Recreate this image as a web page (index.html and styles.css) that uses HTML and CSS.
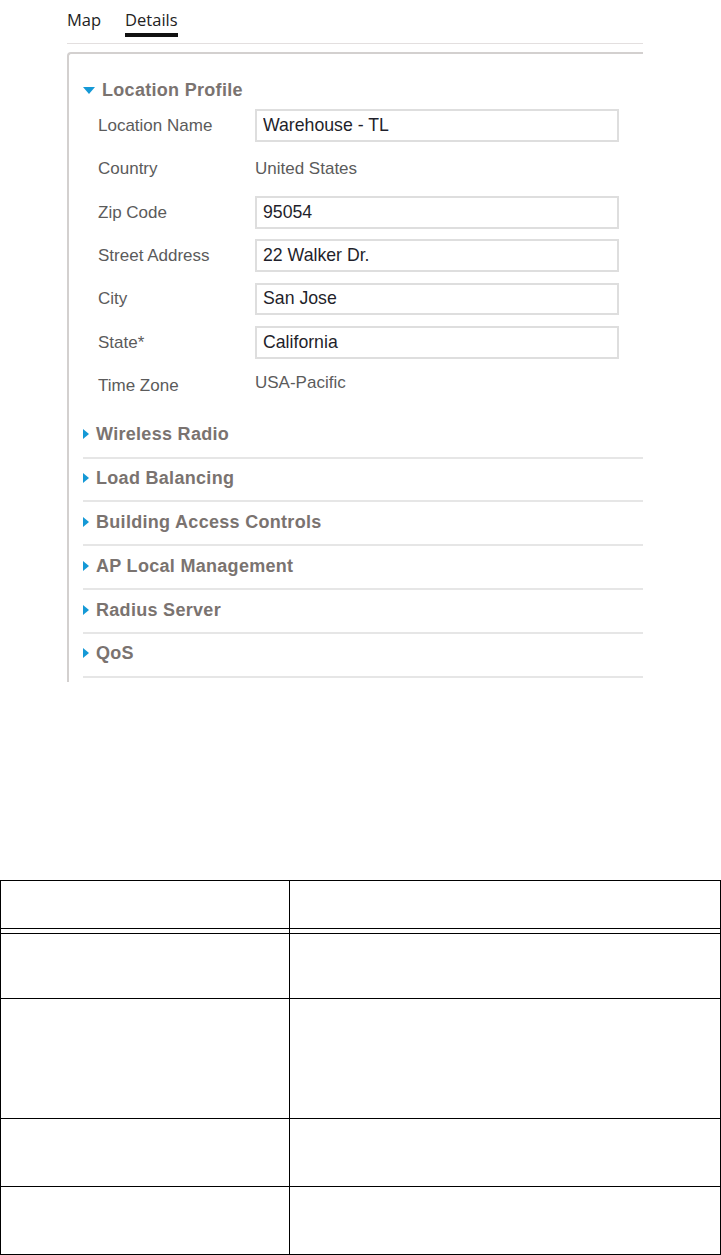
FILE: index.html
```html
<!DOCTYPE html>
<html lang="en">
<head>
    <meta charset="UTF-8">
    <meta name="viewport" content="width=device-width, initial-scale=1.0">
    <title>Location Details</title>
    <link rel="stylesheet" href="styles.css">
</head>
<body>

    <div class="tabs">
        <div class="tab">Map</div>
        <div class="tab active">Details</div>
    </div>

    <div class="panel">

        <div class="section open">
            <div class="section-title"><span class="arrow down"></span>Location Profile</div>
            <div class="form">
                <div class="row">
                    <span class="label">Location Name</span>
                    <input class="field" type="text" value="Warehouse - TL">
                </div>
                <div class="row">
                    <span class="label">Country</span>
                    <span class="value">United States</span>
                </div>
                <div class="row">
                    <span class="label">Zip Code</span>
                    <input class="field" type="text" value="95054">
                </div>
                <div class="row">
                    <span class="label">Street Address</span>
                    <input class="field" type="text" value="22 Walker Dr.">
                </div>
                <div class="row">
                    <span class="label">City</span>
                    <input class="field" type="text" value="San Jose">
                </div>
                <div class="row">
                    <span class="label">State*</span>
                    <input class="field" type="text" value="California">
                </div>
                <div class="row">
                    <span class="label">Time Zone</span>
                    <span class="value raised">USA-Pacific</span>
                </div>
            </div>
        </div>

        <div class="section"><div class="section-title"><span class="arrow"></span>Wireless Radio</div></div>
        <div class="section"><div class="section-title"><span class="arrow"></span>Load Balancing</div></div>
        <div class="section"><div class="section-title"><span class="arrow"></span>Building Access Controls</div></div>
        <div class="section"><div class="section-title"><span class="arrow"></span>AP Local Management</div></div>
        <div class="section"><div class="section-title"><span class="arrow"></span>Radius Server</div></div>
        <div class="section"><div class="section-title"><span class="arrow"></span>QoS</div></div>

    </div>

    <table class="doc-table">
        <thead>
            <tr class="head-row"><th class="first"></th><th></th></tr>
            <tr class="spacer"><td></td><td></td></tr>
        </thead>
        <tbody>
            <tr class="r-short"><td></td><td></td></tr>
            <tr class="r-tall"><td></td><td></td></tr>
            <tr class="r-mid"><td></td><td></td></tr>
            <tr class="r-mid"><td></td><td></td></tr>
        </tbody>
    </table>

</body>
</html>
```

FILE: styles.css
```css
body {
    font-family: "Liberation Sans", Arial, sans-serif;
    background-color: #fff;
    color: #5b5b5b;
    margin: 0;
    padding: 0;
}


/* tabs */
.tabs {
    display: flex;
    gap: 24px;
    width: 576px;
    margin-left: 67px;
    padding-top: 9px;
    padding-bottom: 6px;
    border-bottom: 1px solid #e3dfdf;
    font-family: "Open Sans", sans-serif;
    font-size: 16.5px;
    line-height: 22px;
    color: #222;
}

.tab {
    padding-bottom: 2px;
    border-bottom: 4px solid transparent;
}

.tab.active {
    border-bottom-color: #111;
}


/* panel */
.panel {
    box-sizing: border-box;
    width: 576px;
    margin: 8px 0 0 67px;
    padding: 25px 0 4px 14px;
    border-top: 2px solid #d3d0cf;
    border-left: 2px solid #d3d0cf;
    border-top-left-radius: 4px;
}

.section-title {
    display: flex;
    align-items: center;
    font-size: 18px;
    font-weight: bold;
    line-height: 22px;
    letter-spacing: 0.3px;
    color: #7a7370;
}

.arrow {
    width: 0;
    height: 0;
    margin-right: 7px;
    border-left: 6px solid #1599d6;
    border-top: 5.5px solid transparent;
    border-bottom: 5.5px solid transparent;
}

.arrow.down {
    border-left: 6.5px solid transparent;
    border-right: 6.5px solid transparent;
    border-top: 7px solid #1599d6;
    border-bottom: 0;
}

.section {
    padding: 8.5px 0 11.3px 0;
    border-bottom: 2px solid #e6e6e6;
}

.section.open {
    padding: 0;
    margin-bottom: 7.6px;
    border-bottom: 0;
}


/* form */
.form {
    margin: 3px 0 0 15px;
}

.row {
    display: grid;
    grid-template-columns: 157px 364px;
    align-items: center;
    height: 43.33px;
    font-size: 17px;
}

.label {
    padding-top: 1px;
}

.value.raised {
    margin-top: -6px;
}

.field {
    box-sizing: border-box;
    width: 364px;
    height: 32.5px;
    margin: 0;
    padding: 0 6px;
    border: 2px solid #dedede;
    background: #fff;
    font-family: "Liberation Sans", Arial, sans-serif;
    font-size: 17.7px;
    color: #1f1f2b;
    outline: none;
}


/* table */
.doc-table {
    width: 721px;
    margin-top: 198px;
    border-collapse: collapse;
    table-layout: fixed;
}

.doc-table th,
.doc-table td {
    border: 1px solid #000;
    padding: 0;
}

.doc-table .first {
    width: 288px;
}

.head-row { height: 48px; }
.spacer { height: 5px; }
.r-short { height: 65px; }
.r-tall { height: 120px; }
.r-mid { height: 68px; }
```
